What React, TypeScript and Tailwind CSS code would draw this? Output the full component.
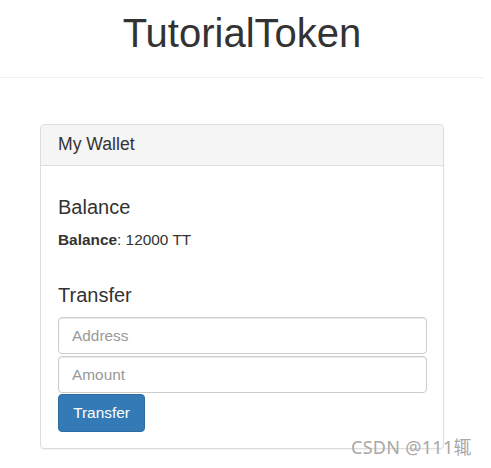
export default function App() {
  return (
    <div
      className="relative w-[491px] h-[468px] bg-white overflow-hidden text-[#333]"
      style={{ fontFamily: '"Liberation Sans", Arial, sans-serif' }}
    >
      <div className="w-[484px]">
        {/* Header */}
        <div className="h-[78px] border-b border-[#eee]">
          <h1 className="pt-[13px] text-center text-[40px] leading-[40px] font-normal">
            TutorialToken
          </h1>
        </div>

        {/* Wallet panel */}
        <div className="mt-[46px] mx-auto w-[404px] border border-[#ddd] rounded-[4px] shadow-[0_1px_1px_rgba(0,0,0,0.05)]">
          <div className="bg-[#f5f5f5] border-b border-[#ddd] rounded-t-[4px] px-[17px] pb-[2px] text-[17.6px] leading-[38px]">
            My Wallet
          </div>
          <div className="px-[17px] pt-[30px] pb-[16px]">
            <h3 className="text-[20px] leading-[22px] font-normal">Balance</h3>
            <p className="mt-[11px] text-[15.4px] leading-[22px]">
              <strong className="font-bold">Balance</strong>: 12000 TT
            </p>
            <h3 className="mt-[33px] text-[20px] leading-[22px] font-normal">Transfer</h3>
            <div className="mt-[11px] flex flex-col gap-[2px]">
              <input
                type="text"
                placeholder="Address"
                className="h-[37px] w-[369px] px-[13px] border border-[#ccc] rounded-[4px] text-[15.4px] text-[#555] placeholder:text-[#999] shadow-[inset_0_1px_1px_rgba(0,0,0,0.075)] outline-none"
              />
              <input
                type="text"
                placeholder="Amount"
                className="h-[37px] w-[369px] px-[13px] border border-[#ccc] rounded-[4px] text-[15.4px] text-[#555] placeholder:text-[#999] shadow-[inset_0_1px_1px_rgba(0,0,0,0.075)] outline-none"
              />
            </div>
            <button
              type="button"
              className="mt-px h-[38px] w-[87px] bg-[#337ab7] border border-[#2e6da4] rounded-[4px] text-white text-[15.4px]"
            >
              Transfer
            </button>
          </div>
        </div>
      </div>

      {/* watermark */}
      <div
        className="absolute left-[351px] top-[434px] text-[18px] leading-[26px] text-[#a8a8a8] tracking-[0.3px]"
        style={{ fontFamily: '"Noto Sans", "Noto Sans CJK SC", sans-serif' }}
      >
        CSDN @111辄
      </div>
    </div>
  );
}
